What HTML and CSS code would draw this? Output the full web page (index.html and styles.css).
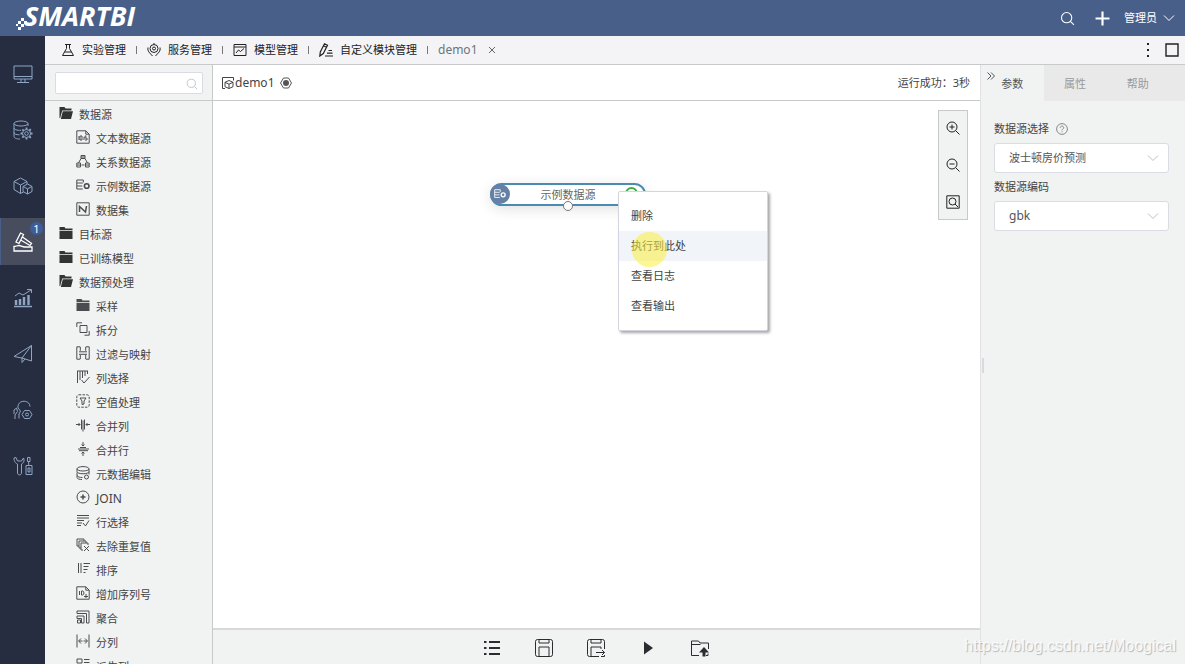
FILE: index.html
```html
<!DOCTYPE html>
<html lang="zh-CN">
<head>
<meta charset="utf-8">
<title>Smartbi - demo1</title>
<link rel="stylesheet" href="styles.css">
</head>
<body>
<svg class="sprite" aria-hidden="true">
  <symbol id="folder" viewBox="0 0 14 14"><path d="M.5 1h5l1 1.500h7v1.500H.5z M.5 4.800h13V13H.5z" fill="currentColor" stroke="none"/></symbol>
  <symbol id="folder-open" viewBox="0 0 14 14"><path d="M.5 12V1h5l1 1.500h6v2H3.200L1.200 12z M3.800 5.200H14L12 13H1.800z" fill="currentColor" stroke="none"/></symbol>
  <symbol id="search" viewBox="0 0 14 14"><circle cx="6.200" cy="6.200" r="4.800"/><path d="M9.700 9.700l3.300 3.300"/></symbol>
  <symbol id="chevron" viewBox="0 0 12 12"><path d="M1 3.500l5 5 5-5"/></symbol>
  <symbol id="flask" viewBox="0 0 14 14"><path d="M4 1.500h6M5.500 1.500v4L1.500 12.500h11L8.500 5.500v-4M3.500 9h7"/></symbol>
  <symbol id="service" viewBox="0 0 14 14"><circle cx="7" cy="5.500" r="4"/><circle cx="7" cy="5.500" r="1.500"/><path d="M7 1V0M1 4.500c-.8 4 2 5.500 4.500 8.500M13 4.500c.8 4-2 5.500-4.500 8.500"/></symbol>
  <symbol id="model" viewBox="0 0 14 14"><path d="M1 1.500h12v11H1zM1 4h12M3 10l2.500-3 2 1.500L11 5.500"/></symbol>
  <symbol id="pencil" viewBox="0 0 14 14"><path d="M.8 13l.5-4L5.500.8l3 1.500L4.300 10.500zM4.500 2.800l3 1.500M9.500 7.500H13M8 10.200h5.500M6 13h8" stroke-width="1.200"/></symbol>
  <symbol id="monitor" viewBox="0 0 20 20"><path d="M1 2h18v13H1zM1 12.500h18M8 15v3M12 15v3M4 18.500h12"/></symbol>
  <symbol id="db-gear" viewBox="0 0 20 20"><ellipse cx="8" cy="3.500" rx="7" ry="2.500"/><path d="M1 3.500v13c0 1.500 2 2.500 6 2.500M15 3.500V6M1 8c0 1.500 3 2.500 7 2.300M1 12.500c0 1.500 2 2.300 5.500 2.300"/><circle cx="13.500" cy="13.500" r="4"/><circle cx="13.500" cy="13.500" r="1.800"/><path stroke-width="1.800" d="M13.500 7.500v2M13.500 17.500v2M7.500 13.500h2M17.500 13.500h2M9.300 9.300l1.300 1.300M16.500 16.500l1.300 1.300M9.300 17.700l1.300-1.300M16.500 10.500l1.300-1.300"/></symbol>
  <symbol id="cubes" viewBox="0 0 20 20"><path d="M7.500 2l6.500 3.500-6.500 3.500L1 5.500zM1 5.500v8L7.500 17.500l3-1.500M7.500 9v8.500M14 5.500V8M14.700 8l4.300 2.500-4.500 2.300L10 10.500zM10 10.500v5l4.500 2.500 4.500-2.500v-5M14.500 12.800V18"/></symbol>
  <symbol id="mining" viewBox="0 0 20 20"><path stroke-width="1.300" d="M1 14.500c2 0 3-1 5-1s3 1.500 6 1.500h7v4H1zM7.500 1l3 1.500L6 11.500l-3-1.500zM9.500 5l9 6.500-1.500 2-9.300-5.500"/></symbol>
  <symbol id="growth" viewBox="0 0 20 20"><path d="M1 18.500h18" stroke-width="1.500"/><path d="M3 17v-5M7 17v-6M11 17V9M15.500 17V7" stroke-width="2.400"/><path d="M2 8l4-3 4 2 8-5M14 1.500h4.500V5"/></symbol>
  <symbol id="plane" viewBox="0 0 20 20"><path d="M18.500 1.500L1 12.500l8 1.500 9.500-12.500V17L9 14v4.500l3-3.500"/></symbol>
  <symbol id="head-gear" viewBox="0 0 20 20"><path d="M5 8c-1-9 12-8.500 12-1.500M2 19v-4l2.500-3.500L3.500 8 1 10v4M5 8l2.500 3L6 14v4.500"/><path d="M11.500 10.500h5l2.500 4-2.500 4h-5L9 14.500z"/><circle cx="14" cy="14.500" r="1.500"/></symbol>
  <symbol id="tools" viewBox="0 0 20 20"><path d="M1 2c0 4 2 5.500 3.500 6v9c0 2.500 4 2.500 4 0V8C10 7.500 12 5 10.500 2L8.500 5h-4L3 1.500zM14.500 1.500h2.500v4h-2.500zM15.700 5.500v4M13 9.500h6v9h-6zM15 12h2v4h-2z"/></symbol>
  <symbol id="cube-box" viewBox="0 0 12 12"><path d="M3 11.500H.5V.5h11v3M7 3.500l4 1.800v4.400l-4 1.800-4-1.800V5.300zM3 5.300l4 1.900 4-1.900M7 7.200v4.300"/></symbol>
  <symbol id="hex-dot" viewBox="0 0 12 12"><path d="M3.500 1h5l3 5-3 5h-5L.5 6z"/><circle cx="6" cy="6" r="3" fill="currentColor" stroke="none"/></symbol>
  <symbol id="file-text" viewBox="0 0 14 14"><path d="M.8 .8h9l3.400 3.400v9H.8zM9.800 .8v3.400h3.400M3 6v4M4 6h2v4H4zM8 7v3M10.500 6H9v2h2v2H9"/></symbol>
  <symbol id="relation" viewBox="0 0 14 14"><path d="M5 1.500h4v3H5zM.8 9h3.700v4H.8zM9.500 9h3.700v4H9.500zM5 4.500L2.500 9M9 4.500L11.500 9M5.500 11h3M5 3h4M1 11h3M10 11h3"/></symbol>
  <symbol id="sample" viewBox="0 0 14 14"><path d="M.8 2h6.500M.8 5h6M.8 8h5.500M.8 11h6M.8 2v9M7.300 2v2.500"/><circle cx="10.700" cy="8" r="2.300" stroke-width="1.600"/></symbol>
  <symbol id="dataset" viewBox="0 0 14 14"><path d="M.8 .8h12.400v12.400H.8z"/><path d="M3.500 10V4.500L9.500 10l1-6" stroke-width="1.500"/></symbol>
  <symbol id="split" viewBox="0 0 14 14"><path d="M4 3.500h7v7H4zM.8 5V.8H6M13.200 9v4.200H8.500"/></symbol>
  <symbol id="filter-map" viewBox="0 0 14 14"><path d="M4 .800H.8v12.400H4M4.300.8v4M4.300 9v4.200M10 .8h3.200v12.400H10M9.700.8v4M9.700 9v4.200M3 5.800h8M3 8.300h8"/></symbol>
  <symbol id="col-select" viewBox="0 0 14 14"><path d="M1 1h11M1.500 1v12M4 1v9M6.500 1v7M9 1v5M11.500 1v3M5.500 10l2.500 3 5.500-6"/></symbol>
  <symbol id="null-value" viewBox="0 0 14 14"><rect x=".8" y=".8" width="12.400" height="12.400" rx="2" stroke-dasharray="2.500 1.200"/><path d="M4 4h6L8 7v3l-2 .5V7z"/></symbol>
  <symbol id="merge-col" viewBox="0 0 14 14"><path d="M0 6.500h4M2.500 5L4 6.500 2.500 8M14 6.500h-4M11.500 5L10 6.500 11.500 8M5.500 1.500v10M7 2.500v11M8.500 1.500v10"/></symbol>
  <symbol id="merge-row" viewBox="0 0 14 14"><path d="M7 0v4M5.500 2.500L7 4l1.500-1.500M7 14v-4M5.500 11.500L7 10l1.500 1.500M4 5.500h6M2 7h11M3 8.700h9"/></symbol>
  <symbol id="meta" viewBox="0 0 14 14"><ellipse cx="7" cy="2.800" rx="6" ry="2.200"/><path d="M1 3v2.500c0 3 12 3 12 0V3M1 6.500V9c0 2 3 2.500 5.500 2.500M1 9.500v2c0 1.500 3 2 5 2M13 5.500v3"/><circle cx="10.500" cy="11" r="2"/></symbol>
  <symbol id="join" viewBox="0 0 14 14"><circle cx="7" cy="7" r="6"/><path d="M7 4.500v5M4.500 7h5" stroke-width="1.500"/></symbol>
  <symbol id="row-select" viewBox="0 0 14 14"><path d="M1 1.500h12M1 4h12M1 6.500h7M1 9h5M1 11.500h4M7 9l2.500 3L13 6.500"/></symbol>
  <symbol id="dedupe" viewBox="0 0 14 14"><path d="M3 8H1V1h7v2M3 3h7v2M3 3v7h2M12 7V5H5v7h2M8 8l5 5M13 8l-5 5"/></symbol>
  <symbol id="sort" viewBox="0 0 14 14"><path d="M2.500 1v10M5 1v10M7.500 1.500H14M7.500 4.500h5M7.500 7.500h4M7.500 10.500h2"/></symbol>
  <symbol id="id-file" viewBox="0 0 14 14"><path d="M.8 .8h9l3.400 3.400v9H.8zM9.800 .8v3.400h3.400M3.500 5v4M5.500 5h1.200c1.700 0 1.700 4 0 4H5.500zM10 8v4M8 10.500h4"/></symbol>
  <symbol id="aggregate" viewBox="0 0 14 14"><path d="M1 1h12v12h-2.500V3.500H1zM1 6h7v7H5.500V8.500H1zM1.500 10h3v3h-3z"/></symbol>
  <symbol id="column-split" viewBox="0 0 14 14"><path d="M1 .5v13M13 .5v13M3 7h3.500M7.500 7H11M5 4.500L2.500 7 5 9.500M9 4.500L11.500 7 9 9.500"/></symbol>
  <symbol id="derive" viewBox="0 0 14 14"><path d="M1 1h5v4H1zM8 1.500h5.500M8 4.500h5.500M1 8h5v4H1zM8 8.500h5.500"/></symbol>
  <symbol id="zoom-in" viewBox="0 0 14 14"><circle cx="6" cy="6" r="5"/><path d="M9.700 9.700L13.500 13.500M6 3.500v5M3.500 6h5"/></symbol>
  <symbol id="zoom-out" viewBox="0 0 14 14"><circle cx="6" cy="6" r="5"/><path d="M9.700 9.700L13.500 13.500M3.500 6h5"/></symbol>
  <symbol id="zoom-fit" viewBox="0 0 14 14"><path d="M.8.800h12.400v12.400H.8z"/><circle cx="6.500" cy="6.500" r="3.500"/><path d="M9 9l3 3"/></symbol>
  <symbol id="list" viewBox="0 0 20 20"><path d="M7 4h11M7 10h11M7 16h11M2 4h2.500M2 10h2.500M2 16h2.500" stroke-width="2"/></symbol>
  <symbol id="save" viewBox="0 0 20 20"><rect x="1.500" y="1.500" width="17" height="17" rx="2"/><path d="M5 1.500V5h10V1.500M5 18.500V9h10v9.500"/></symbol>
  <symbol id="save-as" viewBox="0 0 20 20"><path d="M18.500 11V3.500a2 2 0 0 0-2-2h-13a2 2 0 0 0-2 2v13a2 2 0 0 0 2 2H13M5 1.500V5h10V1.500M5 18.500V9h10v2M10 14.500h8.500M16 12l2.500 2.500L16 17M18.500 17v1.500H15"/></symbol>
  <symbol id="play" viewBox="0 0 20 20"><path d="M6 3.500v13l9-6.500z" fill="currentColor" stroke="none"/></symbol>
  <symbol id="folder-up" viewBox="0 0 20 20"><path d="M9 17.500H1.500V3h7l1.500 2h8.500v6M1.500 6.500h9M18 15.500v2h-2"/><path d="M14 9l5 5.500h-3.500v4h-3v-4H9z" fill="currentColor" stroke="none"/></symbol>
</svg>

<header class="topbar">
  <a class="logo" href="#" aria-label="Smartbi">
    <svg class="logo-flag" viewBox="0 0 12 12"><path d="M5 0h3v3H5zM8 3h3v3H8zM2 3h3v3H2zM5 6h3v3H5zM0 6h2v2H0zM2 9h3v3H2z" fill="currentColor"/></svg>
    <span>SMARTBI</span>
  </a>
  <div class="topbar-actions">
    <button class="plain" aria-label="搜索"><svg class="icon i15"><use href="#search"/></svg></button>
    <button class="plain" aria-label="新建"><svg class="icon i15 plus" viewBox="0 0 14 14"><path d="M7 .5v13M.5 7h13"/></svg></button>
    <button class="plain user">管理员<svg class="icon i12"><use href="#chevron"/></svg></button>
  </div>
</header>

<div class="shell">
  <nav class="rail" aria-label="主导航">
    <button aria-label="首页"><svg class="icon i20"><use href="#monitor"/></svg></button>
    <button aria-label="数据管理"><svg class="icon i20"><use href="#db-gear"/></svg></button>
    <button aria-label="数据准备"><svg class="icon i20"><use href="#cubes"/></svg></button>
    <button class="active" aria-label="数据挖掘"><svg class="icon i20"><use href="#mining"/></svg><span class="badge">1</span></button>
    <button aria-label="分析展现"><svg class="icon i20"><use href="#growth"/></svg></button>
    <button aria-label="资源发布"><svg class="icon i20"><use href="#plane"/></svg></button>
    <button aria-label="公共设置"><svg class="icon i20"><use href="#head-gear"/></svg></button>
    <button aria-label="系统运维"><svg class="icon i20"><use href="#tools"/></svg></button>
  </nav>

  <div class="work">
    <nav class="tabs">
      <a href="#"><svg class="icon i14"><use href="#flask"/></svg>实验管理</a>
      <a href="#"><svg class="icon i14"><use href="#service"/></svg>服务管理</a>
      <a href="#"><svg class="icon i14"><use href="#model"/></svg>模型管理</a>
      <a href="#"><svg class="icon i14"><use href="#pencil"/></svg>自定义模块管理</a>
      <a href="#" class="current">demo1</a>
      <button class="plain close" aria-label="关闭"><svg class="icon i8" viewBox="0 0 8 8"><path d="M1 1l6 6M7 1L1 7"/></svg></button>
      <div class="window-tools">
        <button class="plain" aria-label="更多"><svg class="icon i14" viewBox="0 0 14 14"><path d="M6 0h2v2H6zM6 6h2v2H6zM6 12h2v2H6z" fill="currentColor" stroke="none"/></svg></button>
        <button class="plain" aria-label="最大化"><svg class="icon i14" viewBox="0 0 14 14"><path d="M1 1h12v12H1z" stroke-width="1.400"/></svg></button>
      </div>
    </nav>

    <div class="columns">
      <aside class="resources">
        <div class="search">
          <input type="text" aria-label="搜索资源">
          <svg class="icon i12"><use href="#search"/></svg>
        </div>
        <ul class="tree">
          <li><svg class="icon i14"><use href="#folder-open"/></svg>数据源</li>
          <li class="sub"><svg class="icon i14"><use href="#file-text"/></svg>文本数据源</li>
          <li class="sub"><svg class="icon i14"><use href="#relation"/></svg>关系数据源</li>
          <li class="sub"><svg class="icon i14"><use href="#sample"/></svg>示例数据源</li>
          <li class="sub"><svg class="icon i14"><use href="#dataset"/></svg>数据集</li>
          <li><svg class="icon i14"><use href="#folder"/></svg>目标源</li>
          <li><svg class="icon i14"><use href="#folder"/></svg>已训练模型</li>
          <li><svg class="icon i14"><use href="#folder-open"/></svg>数据预处理</li>
          <li class="sub"><svg class="icon i14"><use href="#folder"/></svg>采样</li>
          <li class="sub"><svg class="icon i14"><use href="#split"/></svg>拆分</li>
          <li class="sub"><svg class="icon i14"><use href="#filter-map"/></svg>过滤与映射</li>
          <li class="sub"><svg class="icon i14"><use href="#col-select"/></svg>列选择</li>
          <li class="sub"><svg class="icon i14"><use href="#null-value"/></svg>空值处理</li>
          <li class="sub"><svg class="icon i14"><use href="#merge-col"/></svg>合并列</li>
          <li class="sub"><svg class="icon i14"><use href="#merge-row"/></svg>合并行</li>
          <li class="sub"><svg class="icon i14"><use href="#meta"/></svg>元数据编辑</li>
          <li class="sub latin"><svg class="icon i14"><use href="#join"/></svg>JOIN</li>
          <li class="sub"><svg class="icon i14"><use href="#row-select"/></svg>行选择</li>
          <li class="sub"><svg class="icon i14"><use href="#dedupe"/></svg>去除重复值</li>
          <li class="sub"><svg class="icon i14"><use href="#sort"/></svg>排序</li>
          <li class="sub"><svg class="icon i14"><use href="#id-file"/></svg>增加序列号</li>
          <li class="sub"><svg class="icon i14"><use href="#aggregate"/></svg>聚合</li>
          <li class="sub"><svg class="icon i14"><use href="#column-split"/></svg>分列</li>
          <li class="sub"><svg class="icon i14"><use href="#derive"/></svg>派生列</li>
        </ul>
      </aside>

      <main class="flow">
        <div class="flow-head">
          <svg class="icon i12"><use href="#cube-box"/></svg>
          <h1>demo1</h1>
          <svg class="icon i12 state"><use href="#hex-dot"/></svg>
          <p class="status">运行成功：3秒</p>
        </div>
        <div class="stage">
          <div class="node">
            <span class="node-icon"><svg class="icon i12"><use href="#sample"/></svg></span>
            <span class="node-name">示例数据源</span>
            <span class="node-ok"></span>
            <span class="port"></span>
          </div>
          <div class="menu" role="menu">
            <button role="menuitem">删除</button>
            <button role="menuitem" class="hover"><span class="pointer"></span>执行到此处</button>
            <button role="menuitem">查看日志</button>
            <button role="menuitem">查看输出</button>
          </div>
          <div class="zoom">
            <button class="plain" aria-label="放大"><svg class="icon i14"><use href="#zoom-in"/></svg></button>
            <button class="plain" aria-label="缩小"><svg class="icon i14"><use href="#zoom-out"/></svg></button>
            <button class="plain" aria-label="适应画布"><svg class="icon i14"><use href="#zoom-fit"/></svg></button>
          </div>
        </div>
        <div class="flow-tools">
          <button class="plain" aria-label="列表"><svg class="icon i20"><use href="#list"/></svg></button>
          <button class="plain" aria-label="保存"><svg class="icon i20"><use href="#save"/></svg></button>
          <button class="plain" aria-label="另存为"><svg class="icon i20"><use href="#save-as"/></svg></button>
          <button class="plain" aria-label="运行"><svg class="icon i20"><use href="#play"/></svg></button>
          <button class="plain" aria-label="导出"><svg class="icon i20"><use href="#folder-up"/></svg></button>
        </div>
      </main>

      <aside class="props">
        <div class="prop-tabs" role="tablist">
          <button role="tab" class="selected" aria-selected="true">参数</button>
          <button role="tab">属性</button>
          <button role="tab">帮助</button>
          <svg class="icon i8 collapse" viewBox="0 0 8 8"><path d="M.5.500L4 4 .5 7.500M4 .5L7.500 4 4 7.500"/></svg>
        </div>
        <form class="prop-form">
          <label for="source">数据源选择<svg class="icon i12 help" viewBox="0 0 12 12"><circle cx="6" cy="6" r="5.400"/><path d="M4.300 4.800c0-2.300 3.400-2.300 3.400 0C7.700 6 6 6 6 7.300M6 8.300v1"/></svg></label>
          <div class="select">
            <select id="source"><option>波士顿房价预测</option></select>
            <svg class="icon i12"><use href="#chevron"/></svg>
          </div>
          <label for="code">数据源编码</label>
          <div class="select">
            <select id="code" class="latin"><option>gbk</option></select>
            <svg class="icon i12"><use href="#chevron"/></svg>
          </div>
        </form>
        <span class="grip"></span>
      </aside>
    </div>
  </div>
</div>
<div class="watermark">https://blog.csdn.net/Moogical</div>
</body>
</html>
```

FILE: styles.css
```css
* { box-sizing: border-box; }

body {
  margin: 0;
  height: 100vh;
  display: flex;
  flex-direction: column;
  overflow: hidden;
  background: #f1f3f3;
  color: #444;
  font: 11px/16px "Noto Sans", "Noto Sans CJK SC", sans-serif;
}

.sprite { position: absolute; width: 0; height: 0; }

button, input, select { font: inherit; color: inherit; }
a { color: inherit; text-decoration: none; }

.plain {
  display: flex;
  align-items: center;
  padding: 0;
  border: 0;
  background: none;
}

.icon { flex: none; fill: none; stroke: currentColor; }
.i8 { width: 8px; height: 8px; }
.i12 { width: 12px; height: 12px; }
.i14 { width: 14px; height: 14px; }
.i15 { width: 15px; height: 15px; }
.i20 { width: 20px; height: 20px; }
.latin { font-size: 12px; }

/* Top bar */
.topbar {
  flex: none;
  height: 36px;
  display: flex;
  align-items: center;
  justify-content: space-between;
  padding: 0 10px 0 16px;
  background: #485f8a;
  color: #fff;
}
.logo {
  display: flex;
  align-items: flex-end;
  font: italic 700 27px/32px "Open Sans", sans-serif;
}
.logo span { margin-left: -4px; padding-bottom: 4px; }
.logo-flag { width: 12px; height: 12px; margin-bottom: 6px; }
.topbar-actions { display: flex; align-items: center; gap: 20px; }
.plus { stroke-width: 2; }
.user { gap: 6px; margin-left: -6px; }

.shell { flex: 1; min-height: 0; display: flex; }

/* Icon rail */
.rail {
  flex: none;
  width: 45px;
  display: flex;
  flex-direction: column;
  gap: 9px;
  padding-top: 14px;
  background: #272d41;
  color: #8ea6c4;
}
.rail button {
  position: relative;
  height: 47px;
  display: flex;
  align-items: center;
  justify-content: center;
  padding: 0;
  border: 0;
  background: none;
}
.rail .active {
  background: #484d5e;
  color: #fff;
  box-shadow: inset 1px 0 #485f8a;
}
.badge {
  position: absolute;
  top: 4px;
  right: 2px;
  width: 13px;
  height: 13px;
  border-radius: 50%;
  background: #3f5d99;
  color: #fff;
  line-height: 13px;
}

/* Tabs */
.work { flex: 1; min-width: 0; display: flex; flex-direction: column; }
.tabs {
  flex: none;
  height: 29px;
  display: flex;
  align-items: center;
  padding: 0 6px 0 16px;
  border-bottom: 1px solid #c8c9ca;
  background: #f4f4f7;
  color: #222;
}
.tabs a { display: flex; align-items: center; gap: 7px; }
.tabs a + a::before {
  content: "";
  width: 1px;
  height: 8px;
  margin: 0 3px 0 10px;
  background: #777;
}
.tabs .current { color: #6b7580; font-size: 12px; }
.close { margin-left: 10px; color: #666; }
.window-tools { margin-left: auto; display: flex; gap: 10px; }

.columns { flex: 1; min-height: 0; display: flex; }

/* Resource tree */
.resources {
  flex: none;
  width: 168px;
  overflow: hidden;
  border-right: 1px solid #c8c9ca;
  background: #f1f3f3;
}
.search {
  position: relative;
  height: 36px;
  padding: 7px 9px 6px 10px;
  border-bottom: 1px solid #c8c9ca;
}
.search input {
  width: 100%;
  height: 22px;
  padding: 0 24px 0 6px;
  border: 1px solid #d9dce3;
  border-radius: 2px;
  background: #fff;
}
.search .icon { position: absolute; right: 14px; top: 13px; color: #b9bfc8; }
.tree { margin: 0; padding: 2px 0 0; list-style: none; }
.tree li {
  height: 24px;
  display: flex;
  align-items: center;
  gap: 6px;
  padding-left: 14px;
  white-space: nowrap;
}
.tree li .icon { margin-bottom: 4px; color: #333; }
.tree .sub { padding-left: 31px; }
.tree .sub .icon { color: #4c4c50; }

/* Flow editor */
.flow { flex: 1; min-width: 0; display: flex; flex-direction: column; background: #fff; }
.flow-head {
  flex: none;
  height: 36px;
  display: flex;
  align-items: center;
  padding: 0 10px 0 9px;
  border-bottom: 1px solid #c8c9ca;
}
.flow-head h1 { margin: 0 5px 0 1px; font-size: 12px; font-weight: 400; line-height: 18px; }
.flow-head .state { color: #555; }
.status { margin: 0 0 0 auto; }
.stage { position: relative; flex: 1; min-height: 0; }

.node {
  position: absolute;
  left: 277px;
  top: 82px;
  width: 156px;
  height: 23px;
  border: 2px solid #4b8bb2;
  border-radius: 12px;
  background: #fff;
  box-shadow: 0 3px 14px rgba(0, 0, 0, .12);
  color: #666;
  line-height: 19px;
  text-align: center;
}
.node-icon {
  position: absolute;
  left: -2px;
  top: -1px;
  width: 20px;
  height: 20px;
  padding: 4px;
  border-radius: 50%;
  background: #667fa5;
  color: #fff;
  line-height: 0;
}
.node-ok {
  position: absolute;
  right: 6px;
  top: 2px;
  width: 13px;
  height: 13px;
  border: 2px solid #3fae49;
  border-radius: 50%;
}
.port {
  position: absolute;
  left: 71px;
  bottom: -7px;
  width: 10px;
  height: 10px;
  border: 1px solid #777;
  border-radius: 50%;
  background: #fff;
}
.menu {
  position: absolute;
  left: 405px;
  top: 90px;
  width: 150px;
  padding: 9px 0;
  border: 1px solid #d3d6e0;
  border-radius: 2px;
  background: #fff;
  box-shadow: 2px 2px 3px rgba(0, 0, 0, .35);
}
.menu button {
  position: relative;
  display: block;
  width: 100%;
  height: 30px;
  padding: 0 12px;
  border: 0;
  background: none;
  text-align: left;
}
.menu .hover { background: #f1f4f8; }
.pointer {
  position: absolute;
  left: 13px;
  top: 1px;
  width: 35px;
  height: 35px;
  border-radius: 50%;
  background: rgba(250, 238, 60, .55);
}
.zoom {
  position: absolute;
  right: 12px;
  top: 9px;
  display: flex;
  flex-direction: column;
  gap: 23px;
  padding: 10px 7px;
  border: 1px solid #c8c9ca;
  background: #f1f3f3;
  color: #222;
}
.flow-tools {
  flex: none;
  height: 36px;
  display: flex;
  align-items: center;
  justify-content: center;
  gap: 32px;
  padding: 2px 2px 0 0;
  border-top: 2px solid #d8d8da;
  background: #f1f3f3;
  color: #2c2c30;
}

/* Properties */
.props {
  position: relative;
  flex: none;
  width: 205px;
  border-left: 1px solid #dfe1e4;
  background: #f1f3f3;
}
.prop-tabs {
  position: relative;
  height: 36px;
  display: flex;
  padding-right: 16px;
  background: #e9e9e9;
}
.prop-tabs button {
  flex: 1;
  padding: 2px 0 0;
  border: 0;
  background: none;
  color: #999;
}
.prop-tabs .selected { background: #f1f3f3; color: #555; }
.collapse { position: absolute; left: 6px; top: 7px; color: #555; }
.prop-form { padding: 20px 16px 0 13px; }
.prop-form label { display: flex; align-items: center; gap: 7px; margin-bottom: 6px; }
.help { color: #888; }
.select { position: relative; height: 30px; margin-bottom: 6px; }
.select select {
  width: 100%;
  height: 30px;
  padding: 0 28px 0 14px;
  border: 1px solid #d9dce3;
  border-radius: 3px;
  background: #fff;
  appearance: none;
  color: #555;
}
.select .icon { position: absolute; right: 10px; top: 9px; color: #b9bfc8; pointer-events: none; }
.grip {
  position: absolute;
  left: 1px;
  top: 293px;
  width: 2px;
  height: 15px;
  background: #d8dadc;
}
.watermark {
  position: absolute;
  right: 9px;
  bottom: 9px;
  color: rgba(255, 255, 255, .85);
  font: 16px/18px "Liberation Sans", Arial, sans-serif;
  text-shadow: 1px 1px 1px rgba(0, 0, 0, .25);
  pointer-events: none;
}
```
